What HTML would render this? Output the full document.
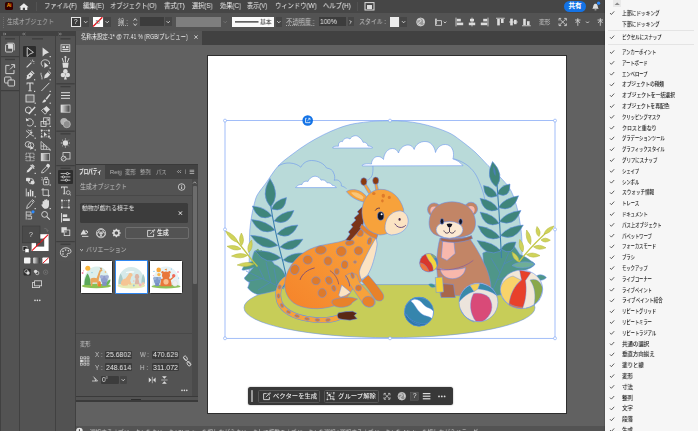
<!DOCTYPE html>
<html lang="ja"><head><meta charset="utf-8"><title>Illustrator</title>
<style>
*{box-sizing:border-box;margin:0;padding:0}
html,body{width:698px;height:431px;overflow:hidden;background:#616161}
body{position:relative;font-family:"Liberation Sans","Noto Sans CJK JP",sans-serif;font-size:6.5px;color:#dcdcdc;line-height:1}
.a{position:absolute}
.t{position:absolute;white-space:nowrap;transform-origin:0 50%;line-height:10px;height:10px;will-change:transform}
svg{position:absolute;left:0;top:0;overflow:visible}
.fld{position:absolute;background:#3e3e3e;border-radius:1px}
</style></head><body>
<div class="a" id="menubar" style="left:0px;top:0px;width:605px;height:13px;background:#464646;"></div>
<div class="a" id="ctrl" style="left:0px;top:13px;width:605px;height:18px;background:#535353;"></div>
<div class="a" id="tabstrip" style="left:0px;top:31px;width:605px;height:13.6px;background:#414141;"></div>
<div class="a" id="tab" style="left:75px;top:31px;width:127px;height:13.6px;background:#565656;"></div>
<div class="a" id="leftbg" style="left:0px;top:31px;width:75.5px;height:400px;background:#414141;"></div>
<div class="a" id="status" style="left:75.5px;top:425.5px;width:530px;height:6px;background:#535353;"></div>
<div class="a" id="artboard" style="left:206.5px;top:55px;width:360px;height:359px;background:#fff;border:1px solid #2e2e2e;"></div>
<svg width="698" height="431" viewBox="0 0 698 431" style="position:absolute;left:0;top:0">
<defs><linearGradient id="gb" x1="0" y1="1" x2="1" y2="0"><stop offset="0" stop-color="#f5832a"/><stop offset="1" stop-color="#f9a63e"/></linearGradient><clipPath id="cb1"><circle cx="478.5" cy="302.3" r="19.4"/></clipPath><clipPath id="cb2"><ellipse cx="521.5" cy="289.3" rx="21.2" ry="19.3"/></clipPath><clipPath id="cb3"><circle cx="428.8" cy="262.8" r="9.2"/></clipPath><clipPath id="cb4"><circle cx="419" cy="311.7" r="14.6"/></clipPath></defs>
<g stroke="#6390f0" stroke-width=".55" stroke-linejoin="round">
<ellipse cx="389.5" cy="307.7" rx="145.5" ry="30" fill="#c7cd58"/>
<path d="M249.0 284.6 C249.0 280.5 249.1 266.6 249.2 260.0 C249.3 253.4 249.3 250.0 249.4 245.0 C249.5 240.0 249.4 235.0 249.8 230.0 C250.2 225.0 250.9 220.0 251.8 215.0 C252.7 210.0 254.2 203.7 255.3 200.0 C256.4 196.3 256.7 195.8 258.5 193.0 C260.3 190.2 262.8 187.4 266.0 183.0 C269.2 178.6 273.6 171.1 277.9 166.3 C282.2 161.6 287.0 158.3 292.0 154.5 C297.0 150.7 302.6 146.7 307.9 143.4 C313.2 140.1 318.6 137.2 323.6 134.7 C328.6 132.2 333.5 130.1 337.9 128.4 C342.3 126.7 346.3 125.5 350.0 124.6 C353.7 123.7 355.8 123.4 360.0 122.8 C364.2 122.2 370.0 121.5 375.0 121.2 C380.0 120.9 385.0 120.7 390.0 120.7 C395.0 120.7 400.0 120.8 405.0 121.3 C410.0 121.8 415.0 122.5 420.0 123.5 C425.0 124.5 430.0 125.9 435.0 127.5 C440.0 129.1 445.8 131.2 450.0 133.3 C454.2 135.4 455.8 136.9 460.0 140.0 C464.2 143.1 470.3 147.8 475.0 152.0 C479.7 156.2 483.4 160.9 488.0 165.5 C492.6 170.1 498.8 175.5 502.6 179.7 C506.4 183.9 508.6 186.2 511.0 190.8 C513.4 195.4 515.4 201.6 517.0 207.5 C518.6 213.4 519.7 219.8 520.5 226.0 C521.3 232.2 521.8 235.2 522.0 245.0 C522.2 254.8 522.0 278.0 522.0 284.6 Z" fill="#b9dad9"/>
<path d="M453.8 158.8 C455.0 159.2 458.5 160.2 461.0 161.5 C463.5 162.8 466.5 164.3 469.0 166.6 C471.5 168.8 473.8 171.3 476.0 175.0 C478.2 178.7 480.5 184.8 482.0 189.0 C483.5 193.2 484.5 198.2 485.0 200.0" fill="none"/>
<path d="M278 166.2 C282 163.5 286 162.8 290 163 C294.5 163.3 298.5 165 300.8 167.2 C303 163 307 160.5 311.5 160.5 C318 160.5 324 163.5 326.5 168 C330 168.5 333 170 333.6 173 C335 175.5 335 178 334.2 180.3 C336 179.6 338.5 180 339.5 181.2 C341 182.5 341.6 184.2 341.3 186 C343.5 186.5 345.5 187.5 346.4 188.7" fill="none"/>
<path d="M372.9 166 C373.1 170 372.9 173 372.1 175.5 C371 178 369.2 179.6 367 180.3" fill="none"/>
<path d="M332.6 148 C333 146.3 335.5 146 338.5 146.2 C338 143 340 141 342.5 141.6 C343.5 138.5 347 137 350 139 C351.5 136 356 134.5 358.8 137 C361 138.5 362.5 140.5 363 142.3 C365.5 141.8 367.5 143.5 368 146 C370.5 146 372.5 146.8 372.5 148 Z" fill="#fff"/>
<path d="M362.3 165 C364 163.8 368 163.5 371.5 164 C371.5 160 374.5 156.5 378 156.5 C380 156.5 382 157.5 383.5 159.5 C384 153 388 148.5 392.5 148.5 C395.5 148.5 397.5 150.5 398.5 153 C400 148 404 145 408 145 C411 145 413 146.8 414.2 149.5 C415.5 144.5 420 141.5 425 141.5 C430.5 141.5 434.5 146 435.5 152.5 C437 147.5 441 144.3 445.5 144.5 C450.5 144.8 453.5 149 453.5 154.5 C453.5 156.5 453.3 158 452.8 159 C457 160 460.5 162.5 463 165.7 L362.3 165.9 Z" fill="#fff"/>
<path d="M295.6 187.6 C297 185.5 299.5 184.3 302 184.5 C302.5 182 305.5 180.5 308 181.5 C309.5 178 313 175.8 316 176.3 C318.5 176.8 320.3 178.3 321 180.2 C323.5 179.3 326 180.5 327 182.8 C329.5 182.5 331.5 183.5 332.3 185.3 C334.5 185.5 336 186.5 336.3 187.6 Z" fill="#fff"/>
<path d="M254.5 251 C258 250 262 252.5 264 256 C268 257.5 272 260 274.5 264.5 C279 266 283.5 270 285.5 276 L286 286 C283 288 281 289 279 289.8 C272 291.8 264 293.8 257.5 294.6 C253 293 249.5 290.5 247.7 287.8 L249.8 282.4 C247 281.5 245 280 244.3 278 L253.4 267.6 C249 269.5 245 270.5 242 270 C243 266 247 262.5 252 261.5 C252 258 253 254 254.5 251 Z" fill="#4f9689"/>
<path d="M255.5 250.5 L258 248.8 L259.4 250.6 L262 250 L261.4 253 L257.5 255.5 Z" fill="#6aa860" stroke="none"/>
<path d="M246 271 L284 289 M258 266 L264 279 M266 262 L271 283 M249 281 L262 278.6 M258 290 L270 282.5 M274 268 L277 285" fill="none" stroke="#4f86c8" stroke-width=".6"/>
<path d="M270.5 204 C273 222 277 240 283 262 L288 284" fill="none" stroke="#3a7fae" stroke-width="1.1"/>
<path d="M270.7 207.0 Q280.9 194.8 270.0 178.5 Q259.9 195.3 270.7 207.0 Z" fill="#3f857b" />
<path d="M271.5 209.0 Q285.0 213.6 286.5 197.5 Q274.7 200.1 271.5 209.0 Z" fill="#3f857b" />
<path d="M274.0 221.0 Q287.9 227.1 294.0 210.5 Q280.0 212.1 274.0 221.0 Z" fill="#3f857b" />
<path d="M277.0 234.0 Q290.5 241.2 298.0 225.0 Q283.8 225.5 277.0 234.0 Z" fill="#3f857b" />
<path d="M280.0 247.0 Q293.5 255.0 303.0 239.2 Q288.0 238.9 280.0 247.0 Z" fill="#3f857b" />
<path d="M283.0 260.0 Q295.8 268.4 305.0 253.0 Q290.7 252.2 283.0 260.0 Z" fill="#3f857b" />
<path d="M272.0 216.0 Q266.1 207.1 252.3 206.0 Q258.1 222.8 272.0 216.0 Z" fill="#3f857b" />
<path d="M275.0 230.0 Q267.2 220.8 251.4 219.6 Q260.1 237.0 275.0 230.0 Z" fill="#3f857b" />
<path d="M278.0 245.5 Q268.3 236.2 250.6 235.3 Q262.2 252.8 278.0 245.5 Z" fill="#3f857b" />
<path d="M281.0 258.0 Q271.5 249.9 255.0 251.0 Q266.9 267.0 281.0 258.0 Z" fill="#3f857b" />
<path d="M236 240 C241 246 246 252 251 259 L257.5 266.5" fill="none" stroke="#c3c748" stroke-width="1.3"/>
<path d="M238.0 242.5 Q235.5 234.7 225.5 231.0 Q230.0 240.7 238.0 242.5 Z" fill="#d0d35a" stroke="#b4b840"/>
<path d="M241.6 245.5 Q245.5 240.2 241.4 233.0 Q237.6 240.3 241.6 245.5 Z" fill="#d0d35a" stroke="#b4b840"/>
<path d="M241.0 249.0 Q235.9 243.9 227.0 246.3 Q234.3 251.9 241.0 249.0 Z" fill="#d0d35a" stroke="#b4b840"/>
<path d="M248.6 252.5 Q253.7 248.2 251.6 240.0 Q246.0 246.3 248.6 252.5 Z" fill="#d0d35a" stroke="#b4b840"/>
<path d="M247.5 255.4 Q240.6 251.5 231.5 256.1 Q241.0 259.9 247.5 255.4 Z" fill="#d0d35a" stroke="#b4b840"/>
<path d="M254.0 264.0 Q246.7 260.5 237.2 265.0 Q247.2 268.4 254.0 264.0 Z" fill="#d0d35a" stroke="#b4b840"/>
<path d="M482.8 253 C488 250.5 494 249.5 500 249.3 C504 247 508 244.5 512.2 244 C515 247 517.5 250.5 519.8 254.6 C524 256 528 258.5 531 261 C533 262 534.5 263 535 264.4 C533 267 529 269 524 270.4 L536 290 L492 296 C487 287 483.5 270 482.8 253 Z" fill="#4f9689"/>
<path d="M512 265.5 C518 261.5 528 260.5 535 264 C530 268.5 519 269.5 512 265.5 Z" fill="#6fae96"/>
<path d="M536.4 276 C539.5 274 543.5 274.5 546.4 277.6 C543.5 280.6 539.5 281 536.4 279 Z" fill="#4f9689"/>
<path d="M492 292 L503 266 L509 252 M500 273 L491 258 M504 264 L514 259 M497 280 L508 276" fill="none" stroke="#4f86c8" stroke-width=".6"/>
<path d="M496 170 C498 195 500 225 501.5 258" fill="none" stroke="#3a7fae" stroke-width="1.1"/>
<path d="M496.4 187.0 Q505.2 174.7 492.5 161.5 Q484.3 177.9 496.4 187.0 Z" fill="#3f857b" />
<path d="M495.3 176.0 Q496.6 171.4 493.5 166.0 Q492.5 172.2 495.3 176.0 Z" fill="#4a7fb5" stroke="none"/>
<path d="M497.3 196.0 Q494.7 187.4 483.5 185.5 Q484.0 201.4 497.3 196.0 Z" fill="#3f857b" />
<path d="M498.3 209.5 Q493.4 200.3 480.0 198.3 Q484.2 215.4 498.3 209.5 Z" fill="#3f857b" />
<path d="M499.3 223.5 Q493.9 214.1 480.0 212.0 Q484.9 229.3 499.3 223.5 Z" fill="#3f857b" />
<path d="M500.2 237.5 Q493.2 227.9 477.8 225.8 Q485.1 243.6 500.2 237.5 Z" fill="#3f857b" />
<path d="M501.0 251.0 Q493.1 241.7 477.0 240.4 Q485.9 257.9 501.0 251.0 Z" fill="#3f857b" />
<path d="M497.3 194.0 Q510.3 199.5 510.0 184.0 Q499.4 185.6 497.3 194.0 Z" fill="#3f857b" />
<path d="M498.3 207.5 Q513.0 213.3 518.6 195.8 Q504.2 198.0 498.3 207.5 Z" fill="#3f857b" />
<path d="M499.3 221.5 Q514.1 227.9 521.0 210.4 Q506.0 212.1 499.3 221.5 Z" fill="#3f857b" />
<path d="M500.2 235.5 Q515.0 242.4 523.3 225.0 Q507.7 226.3 500.2 235.5 Z" fill="#3f857b" />
<path d="M501.0 249.0 Q512.5 257.3 516.0 242.0 Q505.1 241.3 501.0 249.0 Z" fill="#3f857b" />
<path d="M519 262 C528 250 540 238 552 227.5" fill="none" stroke="#c3c748" stroke-width="1.3"/>
<path d="M530.5 244.5 Q532.8 237.4 526.6 230.0 Q524.9 239.5 530.5 244.5 Z" fill="#d0d35a" stroke="#b4b840"/>
<path d="M539.0 236.5 Q541.9 231.6 537.0 226.5 Q534.4 233.0 539.0 236.5 Z" fill="#d0d35a" stroke="#b4b840"/>
<path d="M544.0 234.0 Q550.6 233.6 554.0 226.0 Q545.8 227.7 544.0 234.0 Z" fill="#d0d35a" stroke="#b4b840"/>
<path d="M541.0 240.0 Q544.8 243.9 550.3 240.2 Q545.0 236.3 541.0 240.0 Z" fill="#d0d35a" stroke="#b4b840"/>
<path d="M533.5 246.8 Q538.4 251.2 546.0 247.8 Q539.1 243.3 533.5 246.8 Z" fill="#d0d35a" stroke="#b4b840"/>
<path d="M522.8 252.0 Q525.4 245.8 519.8 239.5 Q517.7 247.7 522.8 252.0 Z" fill="#d0d35a" stroke="#b4b840"/>
<path d="M526.5 254.6 Q531.9 259.1 540.0 255.6 Q532.5 251.0 526.5 254.6 Z" fill="#d0d35a" stroke="#b4b840"/>
<path d="M519.0 262.0 Q519.2 255.6 512.0 252.0 Q512.9 260.0 519.0 262.0 Z" fill="#d0d35a" stroke="#b4b840"/>
<path d="M286 279 C279 284 276.5 293 279.5 302 C283 311 294 316.5 308 319 C320 321 332 320.5 341 316.5" fill="none" stroke="#6390f0" stroke-width="5.8" stroke-linecap="round"/>
<path d="M286 279 C279 284 276.5 293 279.5 302 C283 311 294 316.5 308 319 C320 321 332 320.5 341 316.5" fill="none" stroke="#f7a23b" stroke-width="4.8" stroke-linecap="round"/>
<ellipse cx="279.5" cy="287" rx="1.6" ry="2.2" transform="rotate(15.8 279.5 287)" fill="#de7a2a"/>
<ellipse cx="278.5" cy="296" rx="1.5" ry="2.3" transform="rotate(-5.8 278.5 296)" fill="#de7a2a"/>
<ellipse cx="282" cy="305.5" rx="1.5" ry="2.2" transform="rotate(-35.8 282 305.5)" fill="#de7a2a"/>
<ellipse cx="288.5" cy="312" rx="2.2" ry="1.4" transform="rotate(25.8 288.5 312)" fill="#de7a2a"/>
<ellipse cx="297" cy="316" rx="2.4" ry="1.4" transform="rotate(15.8 297 316)" fill="#de7a2a"/>
<ellipse cx="307" cy="318.8" rx="2.4" ry="1.4" transform="rotate(8 307 318.8)" fill="#de7a2a"/>
<ellipse cx="317.5" cy="320" rx="2.4" ry="1.4" transform="rotate(2 317.5 320)" fill="#de7a2a"/>
<ellipse cx="328" cy="320" rx="2.4" ry="1.4" transform="rotate(-5.8 328 320)" fill="#de7a2a"/>
<path d="M338.5 312.8 L346 311.6 L352.5 311.3 L356.8 313.2 L354.2 315.6 L357.2 318.8 L350 320.2 L343 319.6 L338.5 318.5 C337 316.5 337 314.5 338.5 312.8 Z" fill="#5a2815"/>
<path d="M361.5 281 L368.3 275 C373 280.5 378.5 287 382.5 293 C385 297 383.5 300.5 380 301 C377 301.3 375 299.5 373.5 297 C370 291.5 366 286 361.5 281 Z" fill="#e8822a"/>
<path d="M361.5 224 C357 230 351.5 236 346.5 239.5 C338 243.5 322 243.5 310 249 C297 255 287.5 267 285 280 C283.3 291 288 300.5 297 305 C309 310.5 326 309.5 338 304.5 C344 301.5 349 296 352 290 L361.5 281 L368.5 260 L377.5 235 Z" fill="url(#gb)"/>
<path d="M376.2 238 C375 240 374 241 373.3 242.5 C370 248 367 254 364.4 259.7 C362 264 360 268 359.4 271.6 C359.4 274.5 360.2 277.5 361.6 279.6 L367.5 275.3 C370 271 372 266.5 373.3 261.7 C375 256 376.5 250 377.2 244 Z" fill="#fbe3c3"/>
<path d="M341.7 285 L350.6 292.3 L346 295.5 L340.7 297.2 L338.7 295.2 Z" fill="#fbe3c3"/>
<path d="M332 300.5 C336 297.8 345 297 352 297.4 L357.6 299 L352.8 302.2 C351 305.5 346 307.5 340 307.3 C335 307 331 304.5 332 300.5 Z" fill="#e8822a"/>
<path d="M345.6 276 C348 273 353 272.5 357 275 L359.6 282.4 C365 288 370.5 294 374.4 299 C376.5 303 374.5 306.5 370.5 307 C366.5 307.3 363.5 305 361.5 301.5 C356.5 294 350.5 285.5 345.6 277.5 Z" fill="#f7a23b"/>
<path d="M362.2 301.8 C362.5 298 366 295.8 369.5 296.4 C372.5 297 374.8 299.5 374.6 302.8 C374 306 371.5 307.2 368.5 307 C365.2 306.6 363 304.6 362.2 301.8 Z" fill="#e8822a"/>
<ellipse cx="307.7" cy="259.8" rx="4.6" ry="4.4" transform="rotate(0 307.7 259.8)" fill="#de7a2a"/>
<ellipse cx="328" cy="261" rx="4" ry="4.3" transform="rotate(0 328 261)" fill="#de7a2a"/>
<ellipse cx="294.8" cy="269.6" rx="4.4" ry="5" transform="rotate(20 294.8 269.6)" fill="#de7a2a"/>
<ellipse cx="316" cy="280.8" rx="4.3" ry="4" transform="rotate(0 316 280.8)" fill="#de7a2a"/>
<ellipse cx="328.9" cy="280.4" rx="3.3" ry="4" transform="rotate(-20 328.9 280.4)" fill="#de7a2a"/>
<ellipse cx="322.2" cy="293" rx="4.2" ry="4.4" transform="rotate(0 322.2 293)" fill="#de7a2a"/>
<ellipse cx="333.8" cy="288.3" rx="2" ry="3" transform="rotate(-15.8 333.8 288.3)" fill="#de7a2a"/>
<ellipse cx="341.3" cy="251.4" rx="5" ry="4.9" transform="rotate(0 341.3 251.4)" fill="#de7a2a"/>
<ellipse cx="358.5" cy="250.8" rx="4.3" ry="4.2" transform="rotate(0 358.5 250.8)" fill="#de7a2a"/>
<ellipse cx="349.8" cy="242.8" rx="4.5" ry="2.6" transform="rotate(-10 349.8 242.8)" fill="#de7a2a"/>
<ellipse cx="360" cy="233" rx="3.4" ry="3.6" transform="rotate(0 360 233)" fill="#de7a2a"/>
<ellipse cx="369.5" cy="241" rx="2" ry="3.6" transform="rotate(15.8 369.5 241)" fill="#de7a2a"/>
<ellipse cx="344.7" cy="264.7" rx="3.3" ry="4" transform="rotate(10 344.7 264.7)" fill="#de7a2a"/>
<ellipse cx="352.5" cy="275.5" rx="1.6" ry="3" transform="rotate(-15.8 352.5 275.5)" fill="#de7a2a"/>
<ellipse cx="358.5" cy="288" rx="3" ry="3" transform="rotate(0 358.5 288)" fill="#de7a2a"/>
<ellipse cx="336.8" cy="271.6" rx="2.4" ry="3" transform="rotate(0 336.8 271.6)" fill="#de7a2a"/>
<ellipse cx="355" cy="262" rx="1.4" ry="1.2" transform="rotate(0 355 262)" fill="#de7a2a"/>
<ellipse cx="320.8" cy="250" rx="5.6" ry="4.2" transform="rotate(-8 320.8 250)" fill="#de7a2a"/>
<path d="M300 280 C302 274 307.5 269.5 314.6 267.9" fill="none" stroke="#5a3a8a" stroke-width=".7"/>
<path d="M329.9 270.6 C334.5 273.5 338 279 338.7 284.4 M345.6 275.5 C348 278.5 349.6 282.5 349.6 286.4" fill="none" stroke="#5a3a8a" stroke-width=".6"/>
<path d="M362.5 206.5 L357.2 211.8 L359 213.6 L354 218 L355.8 220 L351 224.8 L352.8 226.8 L348.3 232 L350 234 L345.6 240 L350 240.8 C355 236 359.5 230.5 363 225.5 L364.5 214 Z" fill="#7a3418"/>
<path d="M363 184 L365.5 183.3 L371.5 192.5 L368.5 193.5 Z M374.6 183 L377 183 L378.6 190.5 L375.8 191 Z" fill="#f7a23b"/>
<ellipse cx="363.8" cy="181.6" rx="3.1" ry="3.8" fill="#8b3a0e"/><ellipse cx="375.7" cy="180.7" rx="3" ry="3.6" fill="#8b3a0e"/>
<path d="M365.8 202.5 C359 201.5 350.5 197.5 346.4 191.6 C351.5 187.8 361 189.3 366.5 196.5 Z" fill="#f7a23b"/>
<path d="M362.5 199.5 C358 198.5 353.5 196 351 192.8 C354.5 191.5 360 193 363.5 197 Z" fill="#f9c67a" stroke="none"/>
<path d="M362 213 C361.5 200 369 190 380 189.3 C391 188.8 400 197 403.5 209 L404 216 C399 228 390 234.5 380 235 C369 234 362.5 225 362 213 Z" fill="#f7a23b"/>
<path d="M361.8 224 C366 229 371.5 233 377.8 234.6 L376.6 238.8 C370 237 364 232.5 360 227.5 Z" fill="#e8822a"/>
<path d="M385 229 C384.5 219 391 211 400 210.8 C405.5 211.5 408.5 216.5 408.2 222 C407.5 229.5 400.5 234.5 391.5 235 C388 234.8 385.5 232.5 385 229 Z" fill="#fbe3c3"/>
<ellipse cx="373.8" cy="193.6" rx="1.7" ry="1.5" fill="#de7a2a" stroke="none"/>
<ellipse cx="383.3" cy="195.7" rx="1.7" ry="2" fill="#de7a2a" stroke="none"/>
<ellipse cx="389.3" cy="197.4" rx="1.5" ry="1.6" fill="#de7a2a" stroke="none"/>
<ellipse cx="382.4" cy="200.8" rx="1.3" ry="1.6" fill="#de7a2a" stroke="none"/>
<ellipse cx="380.7" cy="216" rx="3.2" ry="4.2" fill="#141420"/><circle cx="381.6" cy="214.2" r="1" fill="#fff" stroke="none"/>
<path d="M375.2 210.6 C376 208.8 378 207.8 380 208.2" fill="none" stroke="#3a2050" stroke-width=".8"/>
<ellipse cx="399.6" cy="219.4" rx="1.1" ry="1.3" fill="#4a2a4a" stroke="none"/>
<path d="M394.8 223.6 C397 228 402.5 228.8 405.8 225.2" fill="none" stroke="#4a2a6a" stroke-width=".8"/>
<path d="M440 238 C437.8 246 436.6 256 436.7 264 C436.8 274 438 285 440.5 295.6 L490 295.6 C491 291 491.2 287 490.6 283 C489.5 276 487 268.5 483.5 262 C479.5 253.5 474.5 245 469 237.5 Z" fill="#c28566"/>
<path d="M440.5 283.5 L453.5 284.5 L455.3 297.5 L441 297.5 Z" fill="#a8664a"/>
<path d="M435.3 277.5 L442.5 277 L443.6 292 L436.2 292.5 Z" fill="#f2d43a"/>
<path d="M428.5 284.5 C431 283 434 284 435.5 286.5 C433.5 288 430.5 287.5 428.5 284.5 Z" fill="#3f9688"/>
<path d="M440 268.5 C447 270.5 458 270 465.5 267.5 C465.5 273.5 460 278.5 452.5 278.8 C446 278.8 441 275 440 268.5 Z" fill="#f8b8ac"/>
<path d="M435.7 268.8 C444 271.5 462 269.5 473.3 260.4" fill="none" stroke="#8a5a9a" stroke-width=".7"/>
<path d="M442.7 240.9 L453.8 240.9 L455.2 253.4 L447 260.4 L441.3 257.6 Z" fill="#f8b8ac"/>
<path d="M441 237.8 C451 240.5 462 239.5 471.5 235.6 L472.5 238.6 C463 242.8 451 243.5 440.8 240.8 Z" fill="#a8664a"/>
<circle cx="434.2" cy="209.6" r="6.7" fill="#c28566"/><circle cx="434.2" cy="210.4" r="3.9" fill="#f8b8ac" stroke="none"/>
<circle cx="471" cy="208.8" r="6.6" fill="#c28566"/><circle cx="470.8" cy="209.8" r="3.9" fill="#f8b8ac" stroke="none"/>
<path d="M452 201.8 C462 201.8 470 206 473.6 214 C476.6 221 476.2 229 471.4 233.4 C466 237 458 237.6 452 237.6 C446 237.6 438 237 433.2 233.4 C428.2 229 428.2 221 430.8 214 C434.4 206 442 201.8 452 201.8 Z" fill="#c28566"/>
<ellipse cx="449.5" cy="229.8" rx="13.4" ry="8.4" fill="#fbe9d2"/>
<ellipse cx="442" cy="221.4" rx="1.8" ry="2.8" fill="#141420"/><ellipse cx="460.6" cy="221.6" rx="1.8" ry="2.8" fill="#141420"/>
<path d="M446.7 224 C448.5 223.2 450.5 223.2 452.3 224 C452 226 450.8 227.3 449.5 227.6 C448.2 227.3 447 226 446.7 224 Z" fill="#141420" stroke="none"/>
<path d="M449.5 227.5 L449.5 231.5 M443.8 230.5 C445 233.6 448 234 449.5 231.5 C451 234 454 233.6 455.2 230.5" fill="none" stroke="#2a1a3a" stroke-width=".8"/>
<g clip-path="url(#cb3)" stroke-width=".4">
<rect x="418" y="252" width="22" height="22" fill="#d8382c"/>
<path d="M418 263 C422 262 426 265 428 269 C429 271 429.5 272.5 430 274 L418 274 Z" fill="#f0743c"/>
<path d="M425 253 C427 257 428 260 431 263 C433 266 433.5 269 433 272.5 L437 268 C437.5 264 436 261 434 258.5 C432 256 431 254.5 430.5 252.5 Z" fill="#f4d63c"/>
<path d="M430.5 252.5 C431 254.5 432 256 434 258.5 L437.5 257 L434 252 Z" fill="#8ab85a"/>
<path d="M434 258.5 C436 261 437.5 264 437 268 L440 268 L440 256 L437.5 257 Z" fill="#3f8ab8"/>
</g><circle cx="428.8" cy="262.8" r="9.2" fill="none"/>
<g clip-path="url(#cb4)" stroke-width=".4">
<rect x="404" y="296" width="30" height="32" fill="#3585ad"/>
<path d="M404 312 C410 322 424 328 434 320 L434 330 L404 330 Z" fill="#2c78a6"/>
<path d="M405 308 C407 301 414 297 421 297.5 L434 302 L434 296 L404 296 Z" fill="#3f95a8"/>
<path d="M410.8 301 C415.5 297.2 420.5 300.5 423.5 304.5 C427 308.5 431 307.5 433.6 311.5 L433.4 320 C430 315.5 425 317 420.5 313 C416.5 309.5 415 304.5 410.8 301 Z" fill="#fff"/>
</g><circle cx="419" cy="311.7" r="14.6" fill="none"/>
<path d="M406.5 314 C409 320 414 324 420 324.5" fill="none" stroke-width=".4"/>
<g clip-path="url(#cb1)" stroke-width=".4">
<rect x="458" y="282" width="42" height="42" fill="#ece4dc"/>
<path d="M459 302 C459.5 294 464 288 470 285.5 L474 291.5 C468 293 463 297 459 302 Z" fill="#3a8aa8"/>
<path d="M470 285.5 C473 284 477 283.3 480 283.6 L478 289 L474 291.5 Z" fill="#f4cf5a"/>
<path d="M480 283.6 C488 284.5 494.5 289.5 497.2 296 C492 291.5 485 289.5 478 289 Z" fill="#3a8aa8"/>
<path d="M473.5 293.7 C469 302 469.5 313 476 321.5 L482 321.8 C492 316 494.5 306 489 297.5 C484.5 293.5 478.5 292.5 473.5 293.7 Z" fill="#d94a78"/>
</g><circle cx="478.5" cy="302.3" r="19.4" fill="none"/>
<path d="M460.5 309 C463 315.5 468 320 474 321.5 M461.5 311.5 C464.5 317 469 320.5 474.5 322.3" fill="none" stroke-width=".4"/>
<g clip-path="url(#cb2)" stroke-width=".4">
<rect x="499" y="269" width="46" height="42" fill="#f2e8d8"/>
<path d="M500 290 C501 283 506 277.5 513 276 L521 280 C514 286 510 296 509.5 305 C504.5 301.5 501 296 500 290 Z" fill="#f9d36a"/>
<path d="M519.5 270 L531 272.5 L525.5 280.5 C527 290 526 300 522.5 308.5 L509 305 C510 295 514 286 521.5 280 Z" fill="#e8412a"/>
<path d="M530 280 C536 278 540.5 281 542.7 288 C542 295 539 301 534 305 C536 296 535 287 530 280 Z" fill="#8aa84a"/>
<path d="M509.3 303.5 C513 306 518 307.3 522.8 307 L521.5 311 L508 308 Z" fill="#f07a2c"/>
</g><ellipse cx="521.5" cy="289.3" rx="21.2" ry="19.3" fill="none"/>
<path d="M503 298.5 C507 304.5 514 308 521 308.5 M526 308 C532 307 537 303.5 540 299" fill="none" stroke-width=".4"/>
</g>
<rect x="225" y="120.6" width="330" height="217.7" fill="none" stroke="#7aa2f5" stroke-width=".7"/>
<circle cx="225" cy="120.6" r="1.5" fill="#fff" stroke="#7aa2f5" stroke-width=".6"/>
<circle cx="390" cy="120.6" r="1.5" fill="#fff" stroke="#7aa2f5" stroke-width=".6"/>
<circle cx="555" cy="120.6" r="1.5" fill="#fff" stroke="#7aa2f5" stroke-width=".6"/>
<circle cx="225" cy="229.4" r="1.5" fill="#fff" stroke="#7aa2f5" stroke-width=".6"/>
<circle cx="555" cy="229.4" r="1.5" fill="#fff" stroke="#7aa2f5" stroke-width=".6"/>
<circle cx="225" cy="338.3" r="1.5" fill="#fff" stroke="#7aa2f5" stroke-width=".6"/>
<circle cx="390" cy="338.3" r="1.5" fill="#fff" stroke="#7aa2f5" stroke-width=".6"/>
<circle cx="555" cy="338.3" r="1.5" fill="#fff" stroke="#7aa2f5" stroke-width=".6"/>
<circle cx="307.7" cy="120.5" r="5.3" fill="#1473e6"/>
<path d="M306.6 118.3 H305.6 V122.7 H309.9 V121.6" fill="none" stroke="#fff" stroke-width=".8"/><path d="M307.4 120.9 L309.8 118.5 M308.2 118.3 H310 V120.1" fill="none" stroke="#fff" stroke-width=".7"/>
</svg>
<div class="a" style="left:4.6px;top:2.3px;width:8.8px;height:7.4px;background:#330000;border-radius:1.6px;color:#ff9a00;font-size:5px;font-weight:bold;line-height:7.4px;text-align:center;letter-spacing:-.2px">Ai</div>
<svg width="698" height="431" viewBox="0 0 698 431"><path d="M23.9 3.2 L28.6 7.2 H27.3 V10 H25 V7.8 H22.8 V10 H20.5 V7.2 H19.2 Z" fill="#ececec"/><rect x="36" y="2" width="0.6" height="9" fill="#5c5c5c"/><rect x="357.3" y="2" width="0.6" height="9" fill="#5c5c5c"/><rect x="365" y="2.6" width="9" height="7.4" fill="none" stroke="#ddd" stroke-width="1"/><rect x="367" y="5" width="5" height="4" fill="#ddd"/></svg>
<div class="t" style="left:43.6px;top:1.3px;font-size:7px;color:#ececec;transform:scaleX(0.896)">ファイル(F)</div>
<div class="t" style="left:83px;top:1.3px;font-size:7px;color:#ececec;transform:scaleX(0.9)">編集(E)</div>
<div class="t" style="left:110px;top:1.3px;font-size:7px;color:#ececec;transform:scaleX(0.892)">オブジェクト(O)</div>
<div class="t" style="left:164px;top:1.3px;font-size:7px;color:#ececec;transform:scaleX(0.906)">書式(T)</div>
<div class="t" style="left:192px;top:1.3px;font-size:7px;color:#ececec;transform:scaleX(0.882)">選択(S)</div>
<div class="t" style="left:219.6px;top:1.3px;font-size:7px;color:#ececec;transform:scaleX(0.89)">効果(C)</div>
<div class="t" style="left:247.4px;top:1.3px;font-size:7px;color:#ececec;transform:scaleX(0.874)">表示(V)</div>
<div class="t" style="left:275px;top:1.3px;font-size:7px;color:#ececec;transform:scaleX(0.899)">ウィンドウ(W)</div>
<div class="t" style="left:323.3px;top:1.3px;font-size:7px;color:#ececec;transform:scaleX(0.902)">ヘルプ(H)</div>
<div class="a" style="left:564.2px;top:0.9px;width:21.6px;height:11px;background:#1473e6;border-radius:5.5px;color:#fff;font-size:6.6px;font-weight:bold;line-height:10.6px;text-align:center">共有</div>
<svg width="698" height="431" viewBox="0 0 698 431"><path d="M592.3 8.8 C593.2 8 593 5.2 594.2 4.2 C595 3.6 596 3.6 596.8 4.2 C598 5.2 597.8 8 598.7 8.8 Z M594.6 9.4 h1.8 v0.8 h-1.8z" fill="#ddd"/><circle cx="598.6" cy="3.2" r="1.6" fill="#2d8cff"/></svg>
<svg width="698" height="431" viewBox="0 0 698 431"><g fill="#8a8a8a"><rect x="3" y="17" width="0.7" height="0.7"/><rect x="3" y="19" width="0.7" height="0.7"/><rect x="3" y="21" width="0.7" height="0.7"/><rect x="3" y="23" width="0.7" height="0.7"/><rect x="3" y="25" width="0.7" height="0.7"/><rect x="3" y="27" width="0.7" height="0.7"/></g></svg>
<div class="t" style="left:7.3px;top:17px;font-size:6.6px;color:#b4b4b4;transform:scaleX(0.891)">生成オブジェクト</div>
<div class="a" style="left:71.4px;top:17px;width:9.4px;height:9.6px;background:#3a3a3a;border:1px solid #e6e6e6;"></div>
<div class="t" style="left:74.2px;top:16.9px;font-size:6.5px;color:#f0f0f0;">?</div>
<div class="a" style="left:82.3px;top:17px;width:7px;height:9.6px;background:#464646;"></div>
<div class="a" style="left:92.8px;top:17px;width:9.8px;height:9.6px;background:#fff;"></div>
<svg width="698" height="431" viewBox="0 0 698 431"><line x1="93" y1="26.4" x2="102.4" y2="17.2" stroke="#e8141c" stroke-width="1.4"/><rect x="96.2" y="20.3" width="3" height="3" fill="none" stroke="#888" stroke-width=".6"/><path d="M84.10000000000001 21.2 L85.7 22.8 L87.3 21.2" fill="none" stroke="#ddd" stroke-width=".9"/><path d="M105.4 21.2 L107 22.8 L108.6 21.2" fill="none" stroke="#ddd" stroke-width=".9"/></svg>
<div class="a" style="left:104px;top:17px;width:6.5px;height:9.6px;background:#464646;"></div>
<svg width="698" height="431" viewBox="0 0 698 431"><path d="M105.60000000000001 21.2 L107.2 22.8 L108.8 21.2" fill="none" stroke="#ddd" stroke-width=".9"/></svg>
<div class="t" style="left:117.7px;top:17px;font-size:6.4px;color:#c8c8c8;border-bottom:0.5px dotted #aaa;height:9px;transform:scaleX(0.985)">線 :</div>
<svg width="698" height="431" viewBox="0 0 698 431"><path d="M133.6 20.6 L135.2 18.6 L136.8 20.6 M133.6 23.6 L135.2 25.6 L136.8 23.6" fill="none" stroke="#ddd" stroke-width=".9"/><path d="M166.4 21.2 L168 22.8 L169.6 21.2" fill="none" stroke="#ddd" stroke-width=".9"/></svg>
<div class="a" style="left:140.4px;top:17.4px;width:23.6px;height:9px;background:#3c3c3c;"></div>
<div class="a" style="left:165px;top:17.4px;width:6.5px;height:9px;background:#464646;"></div>
<svg width="698" height="431" viewBox="0 0 698 431"><path d="M166.6 21.2 L168.2 22.8 L169.79999999999998 21.2" fill="none" stroke="#ddd" stroke-width=".9"/></svg>
<div class="a" style="left:175.8px;top:17.2px;width:45.2px;height:9.4px;background:#7e7e7e;"></div>
<svg width="698" height="431" viewBox="0 0 698 431"><path d="M223.6 21.2 L225.2 22.8 L226.79999999999998 21.2" fill="none" stroke="#777" stroke-width=".9"/></svg>
<div class="a" style="left:231.7px;top:17.2px;width:42px;height:9.4px;background:#fbfbfb;"></div>
<svg width="698" height="431" viewBox="0 0 698 431"><line x1="235" y1="21.9" x2="258.5" y2="21.9" stroke="#111" stroke-width="1.1"/></svg>
<div class="t" style="left:260px;top:17px;font-size:6px;color:#222;transform:scaleX(0.957)">基本</div>
<div class="a" style="left:275.5px;top:17.2px;width:6.5px;height:9.4px;background:#464646;"></div>
<svg width="698" height="431" viewBox="0 0 698 431"><path d="M277.2 21.2 L278.8 22.8 L280.40000000000003 21.2" fill="none" stroke="#ddd" stroke-width=".9"/></svg>
<div class="t" style="left:286.4px;top:17px;font-size:6.4px;color:#c8c8c8;border-bottom:0.5px dotted #aaa;height:9px;transform:scaleX(0.975)">不透明度 :</div>
<div class="a" style="left:318.7px;top:17.4px;width:27.8px;height:9px;background:#3c3c3c;"></div>
<div class="t" style="left:319.8px;top:17.2px;font-size:7px;color:#e8e8e8;transform:scaleX(0.927)">100%</div>
<div class="a" style="left:347.5px;top:17.4px;width:6px;height:9px;background:#464646;"></div>
<svg width="698" height="431" viewBox="0 0 698 431"><path d="M349.7 20.3 L351.4 22 L349.7 23.7" fill="none" stroke="#ddd" stroke-width=".9"/></svg>
<div class="t" style="left:358.6px;top:17px;font-size:6.4px;color:#c8c8c8;transform:scaleX(0.927)">スタイル :</div>
<div class="a" style="left:389.6px;top:17.2px;width:9.6px;height:9.6px;background:#ececec;"></div>
<div class="a" style="left:400.2px;top:17.2px;width:6.5px;height:9.6px;background:#464646;"></div>
<svg width="698" height="431" viewBox="0 0 698 431"><path d="M402.0 21.2 L403.6 22.8 L405.20000000000005 21.2" fill="none" stroke="#ddd" stroke-width=".9"/></svg>
<svg width="698" height="431" viewBox="0 0 698 431"><circle cx="420.6" cy="22" r="4" fill="#9a9a9a" stroke="#e0e0e0" stroke-width=".7"/><path d="M418 20 C419.5 18.8 421.5 19.4 421 21 C420.5 22.4 418.6 22 418.4 23.4 C418.6 24.6 420.4 24.8 421.4 25.4 M422.6 19 C423.6 20 424 21.5 423.6 23" fill="none" stroke="#e8e8e8" stroke-width=".8"/><path d="M435.5 18.6 V25.4 H441.5 V20.6 H437 M436.4 18.6 V24.4" fill="none" stroke="#ddd" stroke-width=".8"/><path d="M443.7 21.650000000000002 L445 22.95 L446.3 21.650000000000002" fill="none" stroke="#ddd" stroke-width=".9"/><g fill="#dcdcdc"><rect x="455.6" y="17.6" width=".8" height="8.8"/><rect x="456.8" y="18.8" width="4" height="2.6"/><rect x="456.8" y="22.6" width="6.4" height="2.6"/><rect x="471.6" y="17.6" width=".8" height="8.8"/><rect x="470" y="18.8" width="4" height="2.6"/><rect x="468.8" y="22.6" width="6.4" height="2.6"/><rect x="487.6" y="17.6" width=".8" height="8.8"/><rect x="483.2" y="18.8" width="4" height="2.6"/><rect x="480.8" y="22.6" width="6.4" height="2.6"/><rect x="496" y="17.8" width="8.8" height=".8"/><rect x="497.2" y="19" width="2.6" height="6.4"/><rect x="501" y="19" width="2.6" height="4"/><rect x="509" y="21.6" width="8.8" height=".8"/><rect x="510.2" y="18.6" width="2.6" height="6.8"/><rect x="514" y="19.8" width="2.6" height="4.4"/><rect x="522" y="25.4" width="8.8" height=".8"/><rect x="523.2" y="18.8" width="2.6" height="6.4"/><rect x="527" y="21.2" width="2.6" height="4"/></g><path d="M559.6 19 L565.8 25 M565.8 19 L559.6 25 M559 20.6 V18.4 H561.2 M564.2 18.4 H566.4 V20.6 M559 23.4 V25.6 H561.2 M564.2 25.6 H566.4 V23.4" fill="none" stroke="#ddd" stroke-width=".8"/><path d="M575 20 H580.5 M577.8 18.2 V25.8 M575.6 23 L577.8 20.4 L580 23" fill="none" stroke="#ddd" stroke-width=".8"/><path d="M586.1 21.6 L587.5 23.0 L588.9 21.6" fill="none" stroke="#ddd" stroke-width=".9"/><path d="M597.5 20 H603 M600.3 18.2 V25.8 M598 23 L600.3 20.4 L602.6 23" fill="none" stroke="#ddd" stroke-width=".8"/></svg>
<div class="t" style="left:539px;top:17px;font-size:6.2px;color:#c8c8c8;transform:scaleX(0.905)">変形</div>
<div class="t" style="left:80.7px;top:32.2px;font-size:7px;color:#ececec;transform:scaleX(0.766)">名称未設定-1* @ 77.41 % (RGB/プレビュー)</div>
<svg width="698" height="431" viewBox="0 0 698 431"><path d="M194.4 35.4 L197.6 38.8 M197.6 35.4 L194.4 38.8" stroke="#e0e0e0" stroke-width=".8"/></svg>
<div class="a" style="left:1px;top:36.4px;width:18px;height:395px;background:#535353;"></div>
<div class="a" style="left:20.3px;top:36.4px;width:34.7px;height:395px;background:#535353;"></div>
<div class="a" style="left:56.3px;top:36.4px;width:18.4px;height:225px;background:#535353;"></div>
<div class="a" style="left:56.3px;top:261.4px;width:18.4px;height:170px;background:#525252;"></div>
<svg width="698" height="431" viewBox="0 0 698 431"><g fill="none" stroke="#b0b0b0" stroke-width=".6"><path d="M3.2 33 L4.4 34 L3.2 35 M4.8 33 L6 34 L4.8 35"/><path d="M23.8 33 L22.6 34 L23.8 35 M25.4 33 L24.2 34 L25.4 35"/><path d="M58.6 33 L59.8 34 L58.6 35 M60.2 33 L61.4 34 L60.2 35"/></g></svg>
<svg width="698" height="431" viewBox="0 0 698 431"><g fill="#3e3e3e"><rect x="5" y="38.2" width="10" height="1.3"/><rect x="32" y="38.2" width="11" height="1.3"/><rect x="60.5" y="38.2" width="10" height="1.3"/><rect x="1" y="56" width="18" height="1.2"/><rect x="5" y="58.8" width="10" height="1.3"/><rect x="1" y="90" width="18" height="1.2"/><rect x="56.3" y="83.2" width="18.4" height="1.2"/><rect x="60.5" y="86" width="10" height="1.3"/><rect x="56.3" y="130.6" width="18.4" height="1.2"/><rect x="60.5" y="133.2" width="10" height="1.3"/><rect x="56.3" y="165" width="18.4" height="1.2"/><rect x="60.5" y="167.6" width="10" height="1.3"/><rect x="56.3" y="241" width="18.4" height="1.2"/><rect x="60.5" y="243.6" width="10" height="1.3"/></g></svg>
<svg width="698" height="431" viewBox="0 0 698 431"><g fill="none" stroke="#dcdcdc" stroke-width=".9"><rect x="5.6" y="44.4" width="7" height="7.6" rx="1"/><path d="M7.4 43.2 H13.2 Q14.2 43.2 14.2 44.2 V50.4"/><rect x="8.6" y="44.6" width="3.8" height="3.6" fill="#dcdcdc"/><path d="M9.5 65.4 H5.8 V73.6 H14 V70 M10 69.4 L14.4 65 M11.2 64.6 H14.6 V68"/><rect x="4.6" y="77" width="6.4" height="6" rx="1"/><rect x="8" y="80" width="6.6" height="6" rx="1" fill="#535353"/></g></svg>
<div class="a" style="left:23.3px;top:46.3px;width:13.2px;height:10.4px;background:#2c2c2c;border-radius:1px;"></div>
<svg width="698" height="431" viewBox="0 0 698 431"><path d="M27.2 47.6 L27.2 56.4 L29.6 54.2 L33.4 52.4 Z" fill="none" stroke="#dcdcdc" stroke-width=".9" stroke-linejoin="round"/><path d="M42.6 47.4 L42.6 56.6 L45 54.2 L49 52.6 Z" fill="#dcdcdc"/><rect x="49.6" y="56" width="1.2" height="1.2" fill="#dcdcdc"/><path d="M26.6 67.4 L31.4 62.6" stroke="#dcdcdc" stroke-width="1.2"/><path d="M32.6 59.6 V61.4 M34.4 61.6 H32.9 M30.6 60.6 L31.4 61.4 M33.6 63.2 L34.2 63.8" stroke="#dcdcdc" stroke-width=".7"/><path d="M41.4 64.4 C40.6 61.4 43 59.6 45.6 59.8 C48.4 60 50 62 49.4 64 M43 66.4 C42 65.8 41.6 65.2 41.4 64.4" fill="none" stroke="#dcdcdc" stroke-width=".9"/><path d="M44.4 62.2 L44.4 68.2 L46 66.8 L48.6 66 Z" fill="#dcdcdc"/><rect x="49.6" y="67.6" width="1.2" height="1.2" fill="#dcdcdc"/><path d="M26.4 79.4 L27.2 75.2 L30.6 72 L33.2 74.6 L30.2 78.2 Z" fill="#dcdcdc"/><path d="M31.4 71 L34.2 73.8" stroke="#dcdcdc" stroke-width="1.1"/><circle cx="29.6" cy="75.8" r=".8" fill="#535353"/><rect x="34" y="79.2" width="1.2" height="1.2" fill="#dcdcdc"/><path d="M44 78.6 L44.8 75 L47.8 72 L50.2 74.4 L47.4 77.6 Z" fill="#dcdcdc"/><path d="M48.4 71 L51 73.6" stroke="#dcdcdc" stroke-width="1"/><path d="M41 72.8 C40.6 75.6 42.4 76.2 42 79.4" fill="none" stroke="#dcdcdc" stroke-width=".8"/><rect x="49.6" y="79.2" width="1.2" height="1.2" fill="#dcdcdc"/><path d="M26.6 82.6 H33.4 V84.6 H32.6 V83.6 H30.6 V90.4 H31.8 V91.2 H28.2 V90.4 H29.4 V83.6 H27.4 V84.6 H26.6 Z" fill="#dcdcdc"/><rect x="34" y="90.8" width="1.2" height="1.2" fill="#dcdcdc"/><path d="M41.4 91 L49.4 82.8" stroke="#dcdcdc" stroke-width=".9"/><rect x="49.6" y="90.8" width="1.2" height="1.2" fill="#dcdcdc"/><rect x="26" y="95" width="8" height="7" fill="#6a6a6a" stroke="#dcdcdc" stroke-width=".9"/><rect x="34.6" y="102.6" width="1.2" height="1.2" fill="#dcdcdc"/><path d="M49.8 93.8 L45.6 98.6 L46.8 99.8 L50.6 94.6 Z" fill="#dcdcdc"/><path d="M45 99.2 C43.6 99.4 43.2 101 42 102.4 C43.8 102.8 45.8 102 46.2 100.4 Z" fill="#dcdcdc"/><rect x="49.6" y="102.6" width="1.2" height="1.2" fill="#dcdcdc"/><circle cx="28.4" cy="110" r="3" fill="none" stroke="#dcdcdc" stroke-width=".9"/><path d="M28.2 113.6 L34.6 106.6 L35.6 107.6 L29.4 114.4 Z" fill="#dcdcdc"/><rect x="34.6" y="114.2" width="1.2" height="1.2" fill="#dcdcdc"/><path d="M41.4 110.6 L46.4 106 L50 109.6 L45 114.2 Z" fill="#dcdcdc"/><path d="M41.4 110.6 L43.4 108.8 L47 112.4 L45 114.2 Z" fill="#535353" stroke="#dcdcdc" stroke-width=".7"/><rect x="49.6" y="114.2" width="1.2" height="1.2" fill="#dcdcdc"/><path d="M27 124.6 C28.6 126.6 31.6 126.4 32.8 124.2 C34 121.8 32.4 118.8 29.6 118.8 C28.4 118.8 27.6 119.2 27 119.8" fill="none" stroke="#dcdcdc" stroke-width=".9"/><path d="M25.8 118 L26.2 121.2 L29.2 120.4 Z" fill="#dcdcdc"/><rect x="34.6" y="125.8" width="1.2" height="1.2" fill="#dcdcdc"/><rect x="41" y="121.4" width="5" height="5" fill="none" stroke="#dcdcdc" stroke-width=".8"/><rect x="43.6" y="117.8" width="6.2" height="6.2" fill="none" stroke="#dcdcdc" stroke-width=".8"/><path d="M45 122.6 L48.4 119.2 M46.4 119 H48.6 V121.2" fill="none" stroke="#dcdcdc" stroke-width=".7"/><rect x="49.6" y="125.8" width="1.2" height="1.2" fill="#dcdcdc"/><path d="M26 137.6 C28 137.4 28.4 135 29.8 134.4 C31.4 134 32 136.2 33.8 136 M26 130.6 L29.6 133.6 M27.8 129.6 C28.8 131 30.6 131.2 31.6 130" fill="none" stroke="#dcdcdc" stroke-width=".9"/><circle cx="31.2" cy="132.6" r="1.2" fill="#dcdcdc"/><rect x="34.6" y="137.6" width="1.2" height="1.2" fill="#dcdcdc"/><rect x="41.6" y="130.4" width="7.4" height="6.4" fill="none" stroke="#dcdcdc" stroke-width=".7" stroke-dasharray="1.2 .8"/><g fill="#dcdcdc"><rect x="40.8" y="129.6" width="1.6" height="1.6"/><rect x="48.2" y="129.6" width="1.6" height="1.6"/><rect x="40.8" y="136" width="1.6" height="1.6"/><rect x="48.2" y="136" width="1.6" height="1.6"/><path d="M44 132 L44 136.6 L45.2 135.4 L47.2 135 Z"/></g><rect x="49.6" y="137.6" width="1.2" height="1.2" fill="#dcdcdc"/><circle cx="28" cy="144.4" r="2.8" fill="none" stroke="#dcdcdc" stroke-width=".8"/><circle cx="31" cy="145.4" r="2.8" fill="none" stroke="#dcdcdc" stroke-width=".8"/><path d="M30.4 145.6 L30.4 150 L31.6 149 L33.6 148.6 Z" fill="#dcdcdc"/><rect x="34.6" y="149.4" width="1.2" height="1.2" fill="#dcdcdc"/><path d="M41 149.4 L41 141.4 L50 149.4 Z M43.6 149.4 V143.8 M46.4 149.4 V146.2 M41 146 L46.2 146.2" fill="none" stroke="#dcdcdc" stroke-width=".7"/><rect x="49.6" y="149.4" width="1.2" height="1.2" fill="#dcdcdc"/><rect x="26" y="153.2" width="8" height="7.6" fill="none" stroke="#dcdcdc" stroke-width=".7" stroke-dasharray="1.4 .7"/><path d="M26 157 C28.4 156 31.6 158 34 157 M30 153.2 C29.2 155.6 30.8 158.4 30 160.8" fill="none" stroke="#dcdcdc" stroke-width=".7"/><defs><linearGradient id="tg" x1="0" x2="1"><stop offset="0" stop-color="#e8e8e8"/><stop offset="1" stop-color="#3a3a3a"/></linearGradient></defs><rect x="41.2" y="153.4" width="8.4" height="7.4" fill="url(#tg)" stroke="#dcdcdc" stroke-width=".7"/><path d="M26.6 172.6 L27.2 170.4 L31 166.6 L32.6 168.2 L28.8 172 Z" fill="#dcdcdc"/><path d="M30.6 165 L34.2 168.6 M32.2 164.6 L34.4 166.8" stroke="#dcdcdc" stroke-width="1.1"/><rect x="34.6" y="172.8" width="1.2" height="1.2" fill="#dcdcdc"/><path d="M41.6 173 L42.2 170.6 L46.8 166 L48.6 167.8 L44 172.4 Z" fill="none" stroke="#dcdcdc" stroke-width=".8"/><path d="M47.2 164 C48.6 163.2 50.6 165.2 49.8 166.6 L48.4 168 L46 165.6 Z" fill="#dcdcdc"/><rect x="49.6" y="172.8" width="1.2" height="1.2" fill="#dcdcdc"/><rect x="26" y="177.8" width="4" height="3.4" rx=".8" fill="#dcdcdc"/><circle cx="31" cy="181.2" r="2.6" fill="none" stroke="#dcdcdc" stroke-width=".8"/><circle cx="32.6" cy="182.6" r="2" fill="#dcdcdc"/><rect x="43.4" y="179.4" width="5.4" height="5.4" rx=".8" fill="none" stroke="#dcdcdc" stroke-width=".8"/><path d="M44.8 179.4 V177.4 H47.4 V179.4 M41.6 177.6 L42.8 178.2 M41.4 179.8 H42.6" fill="none" stroke="#dcdcdc" stroke-width=".8"/><circle cx="46.2" cy="182.2" r="1" fill="#dcdcdc"/><rect x="49.6" y="184.4" width="1.2" height="1.2" fill="#dcdcdc"/><g fill="#dcdcdc"><rect x="25.8" y="188.4" width=".8" height="8"/><rect x="27.6" y="192" width="1.4" height="4.4"/><rect x="29.8" y="189.6" width="1.4" height="6.8"/><rect x="32" y="191" width="1.4" height="5.4"/><rect x="34.6" y="196.2" width="1.2" height="1.2"/></g><path d="M43 188 V195.4 H50 M41.4 189.8 H48.4 V196.8" fill="none" stroke="#dcdcdc" stroke-width=".8"/><path d="M26.6 208.6 L27.4 205.4 L31.6 200.6 L33.4 202.2 L29.4 207.2 Z" fill="none" stroke="#dcdcdc" stroke-width=".8"/><path d="M32.4 199.6 L34.4 201.4" stroke="#dcdcdc" stroke-width="1"/><rect x="34.6" y="208" width="1.2" height="1.2" fill="#dcdcdc"/><path d="M42.6 204.4 V201.4 Q43.4 200.6 44.2 201.4 V200 Q45 199.2 45.8 200 V199.6 Q46.6 198.8 47.4 199.6 V200.6 Q48.2 199.8 49 200.6 V205 C49 207.4 47.8 208.8 45.8 208.8 C43.8 208.8 43 207.6 41.6 205.4 C41.2 204.4 42 204 42.6 204.4 Z" fill="#dcdcdc"/><rect x="49.6" y="208" width="1.2" height="1.2" fill="#dcdcdc"/><path d="M26.2 211.4 V219.6 M26.2 212 H31 V215 H26.2 M27.4 216.2 H31.6 V219 H27.4" fill="none" stroke="#dcdcdc" stroke-width=".8"/><circle cx="33" cy="211.8" r="1.6" fill="#2d8cff"/><circle cx="44.6" cy="214.4" r="2.9" fill="none" stroke="#dcdcdc" stroke-width=".9"/><path d="M46.8 216.6 L49.8 219.6" stroke="#dcdcdc" stroke-width="1.1"/><rect x="31.6" y="234.2" width="17" height="16.8" fill="#fff"/><rect x="36" y="238.6" width="8.2" height="8" fill="#535353"/><path d="M32 250.6 L48.2 234.6" stroke="#e8141c" stroke-width="1.1"/><rect x="22.6" y="226" width="17.4" height="16.8" fill="#4a4a4a" stroke="#3a3a3a" stroke-width=".6"/><path d="M44.4 228.6 C46.2 228.2 47.6 229.4 47.4 231.2 M46.4 230.6 L47.4 231.6 L48.4 230.4" fill="none" stroke="#7a7a7a" stroke-width=".7"/><rect x="23" y="246.6" width="4" height="4" fill="#222" stroke="#ddd" stroke-width=".5"/><rect x="25" y="248.6" width="4" height="4" fill="#fff" stroke="#222" stroke-width=".4"/><rect x="24" y="257.4" width="6.4" height="6.2" rx=".8" fill="#f4f4f4"/><rect x="33.2" y="257.4" width="6.4" height="6.2" rx=".8" fill="url(#tg)"/><rect x="42.4" y="257.4" width="6.6" height="6.2" rx=".8" fill="#fff"/><path d="M42.8 263.2 L48.6 257.8" stroke="#e8141c" stroke-width="1"/><rect x="23.6" y="268.8" width="7.2" height="6.8" rx="1" fill="#2c2c2c"/><circle cx="26.4" cy="271.4" r="1.7" fill="none" stroke="#dcdcdc" stroke-width=".7"/><circle cx="28" cy="273" r="1.7" fill="#dcdcdc"/><circle cx="35.6" cy="271.4" r="1.7" fill="#dcdcdc"/><circle cx="37.2" cy="273" r="1.7" fill="none" stroke="#dcdcdc" stroke-width=".7"/><circle cx="45.6" cy="272.2" r="2.2" fill="none" stroke="#777" stroke-width=".7"/><circle cx="45.6" cy="272.2" r=".8" fill="#777"/><rect x="32.4" y="282.6" width="7" height="5" fill="#535353" stroke="#dcdcdc" stroke-width=".8"/><rect x="34.6" y="280.8" width="7" height="5" fill="#535353" stroke="#dcdcdc" stroke-width=".8"/><g fill="#dcdcdc"><circle cx="35" cy="300.4" r=".8"/><circle cx="37.4" cy="300.4" r=".8"/><circle cx="39.8" cy="300.4" r=".8"/></g></svg>
<div class="t" style="left:29.3px;top:229.6px;font-size:7px;color:#dcdcdc;">?</div>
<svg width="698" height="431" viewBox="0 0 698 431"><rect x="61" y="44.8" width="8.8" height="6.6" fill="none" stroke="#dcdcdc" stroke-width=".8"/><rect x="62.4" y="46.2" width="2.6" height="1.8" fill="#dcdcdc"/><rect x="66" y="46.2" width="2.6" height="1.8" fill="#dcdcdc"/><rect x="62.4" y="48.8" width="6.2" height="1.4" fill="#dcdcdc"/><path d="M62.4 62.8 H68.6 L68 67.8 H63 Z" fill="#dcdcdc"/><path d="M63.6 62.4 L62.2 58 M65.4 62.4 V56.8 M67.2 62.4 L69 58 M64.4 57.4 L65.4 56 L66.4 57.4" fill="none" stroke="#dcdcdc" stroke-width="1"/><circle cx="65.4" cy="71.4" r="2.3" fill="#dcdcdc"/><circle cx="63" cy="75" r="2.3" fill="#dcdcdc"/><circle cx="67.8" cy="75" r="2.3" fill="#dcdcdc"/><path d="M65.4 74 L64 79.4 H66.8 Z" fill="#dcdcdc"/><g fill="#dcdcdc"><rect x="61" y="92.2" width="9" height="1"/><rect x="61" y="95" width="9" height="1"/><rect x="61" y="97.8" width="9" height="1"/></g><rect x="61" y="105" width="9" height="7.2" fill="url(#tg)" stroke="#dcdcdc" stroke-width=".7"/><circle cx="64" cy="121.6" r="3.6" fill="#b4b4b4"/><circle cx="66.8" cy="124.2" r="3.6" fill="#8e8e8e" stroke="#dcdcdc" stroke-width=".5"/><circle cx="65.4" cy="143" r="2.7" fill="#dcdcdc"/><g stroke="#dcdcdc" stroke-width=".8"><path d="M65.4 138.4 V139.6 M65.4 146.4 V147.6 M60.8 143 H62 M68.8 143 H70 M62.2 139.8 L63 140.6 M67.8 145.4 L68.6 146.2 M68.6 139.8 L67.8 140.6 M62.2 146.2 L63 145.4"/></g><rect x="63" y="152.6" width="7" height="6.4" fill="none" stroke="#dcdcdc" stroke-width=".8"/><circle cx="63.6" cy="158.6" r="2.4" fill="#535353" stroke="#dcdcdc" stroke-width=".8"/><path d="M61.4 160 L65.8 156.6" stroke="#dcdcdc" stroke-width=".6"/></svg>
<div class="a" style="left:58px;top:170.2px;width:15px;height:13.4px;background:#2e2e2e;border-radius:1px;"></div>
<svg width="698" height="431" viewBox="0 0 698 431"><g stroke="#dcdcdc" stroke-width=".8" fill="#2e2e2e"><path d="M60.6 173.6 H70.4 M60.6 176.9 H70.4 M60.6 180.2 H70.4"/><circle cx="67.4" cy="173.6" r="1.1"/><circle cx="63.4" cy="176.9" r="1.1"/><circle cx="66.4" cy="180.2" r="1.1"/></g><path d="M61 186.6 H67.6 V188.2 H66.8 V187.6 H64.8 V193.4 H65.6 V194.2 H63 V193.4 H63.8 V187.6 H61.8 V188.2 H61 Z" fill="#dcdcdc"/><circle cx="68.2" cy="192.6" r="1.9" fill="none" stroke="#dcdcdc" stroke-width=".7"/><path d="M69.6 194 L71 195.4" stroke="#dcdcdc" stroke-width=".8"/><rect x="62" y="200.6" width="6.8" height="6.8" fill="none" stroke="#dcdcdc" stroke-width=".7" stroke-dasharray="1.2 .9"/><g fill="#dcdcdc"><rect x="61" y="199.6" width="1.8" height="1.8"/><rect x="68" y="199.6" width="1.8" height="1.8"/><rect x="61" y="206.6" width="1.8" height="1.8"/><rect x="68" y="206.6" width="1.8" height="1.8"/></g><g fill="#dcdcdc"><rect x="61" y="213" width=".9" height="9.4"/><rect x="62.8" y="214.4" width="4.4" height="2.6"/><rect x="62.8" y="218.4" width="7" height="2.6"/></g><rect x="61.4" y="227.2" width="5.4" height="5.4" fill="#dcdcdc"/><rect x="64.2" y="230" width="5.6" height="5.6" fill="#535353" stroke="#dcdcdc" stroke-width=".8"/><rect x="64.2" y="230" width="2.6" height="2.6" fill="#9a9a9a"/><path d="M60.4 252.6 C60.4 249.6 63 247.8 66 247.8 C69 247.8 71 249.4 71 251.4 C71 253.2 69.4 253.4 68.2 253.4 C67 253.4 66.8 254.4 67.4 255 C67.8 256 66.8 256.8 65.4 256.8 C62.4 256.8 60.4 255.2 60.4 252.6 Z" fill="none" stroke="#dcdcdc" stroke-width=".9"/><circle cx="63" cy="251.4" r=".8" fill="#dcdcdc"/><circle cx="65.6" cy="250" r=".8" fill="#dcdcdc"/><circle cx="68.4" cy="250.8" r=".8" fill="#dcdcdc"/><circle cx="63" cy="254" r=".8" fill="#dcdcdc"/></svg>
<div class="a" style="left:75.6px;top:164.4px;width:122.4px;height:237.6px;background:#3a3a3a;"></div>
<div class="a" style="left:76px;top:165px;width:121.6px;height:13.6px;background:#424242;"></div>
<div class="a" style="left:76px;top:165px;width:28.6px;height:13.8px;background:#535353;"></div>
<div class="a" style="left:76px;top:178.6px;width:121.6px;height:217.6px;background:#535353;"></div>
<div class="a" style="left:76px;top:397px;width:121.6px;height:3.4px;background:#535353;"></div>
<div class="a" style="left:192px;top:178.6px;width:5.6px;height:217.6px;background:#4a4a4a;"></div>
<div class="a" style="left:192.6px;top:186px;width:4.2px;height:98px;background:#6c6c6c;border-radius:1px;"></div>
<svg width="698" height="431" viewBox="0 0 698 431"><path d="M193.2 183.4 L194.7 181.8 L196.2 183.4" fill="none" stroke="#bbb" stroke-width=".8"/></svg>
<div class="t" style="left:79.3px;top:166.6px;font-size:6.4px;color:#f2f2f2;font-weight:bold;transform:scaleX(0.716)">プロパティ</div>
<div class="t" style="left:109.6px;top:166.8px;font-size:5.8px;color:#b8b8b8;transform:scaleX(0.964)">Retყ</div>
<div class="t" style="left:125px;top:166.8px;font-size:5.8px;color:#b8b8b8;transform:scaleX(0.948)">変形</div>
<div class="t" style="left:140px;top:166.8px;font-size:5.8px;color:#b8b8b8;transform:scaleX(0.948)">整列</div>
<div class="t" style="left:155.6px;top:166.8px;font-size:5.8px;color:#b8b8b8;transform:scaleX(0.913)">パス</div>
<svg width="698" height="431" viewBox="0 0 698 431"><g fill="none" stroke="#c8c8c8" stroke-width=".7"><path d="M178.8 170.2 L177.4 171.6 L178.8 173 M181 170.2 L179.6 171.6 L181 173"/></g><rect x="185" y="169.4" width=".6" height="4.6" fill="#9a9a9a"/><g fill="#c8c8c8"><rect x="189.6" y="169.8" width="4.6" height=".7"/><rect x="189.6" y="171.4" width="4.6" height=".7"/><rect x="189.6" y="173" width="4.6" height=".7"/></g></svg>
<div class="t" style="left:80px;top:182px;font-size:6.4px;color:#c4c4c4;transform:scaleX(0.919)">生成オブジェクト</div>
<svg width="698" height="431" viewBox="0 0 698 431"><circle cx="181.6" cy="187" r="3.3" fill="none" stroke="#dcdcdc" stroke-width=".8"/><rect x="181.2" y="186.4" width=".9" height="2.6" fill="#dcdcdc"/><rect x="181.2" y="184.8" width=".9" height=".9" fill="#dcdcdc"/></svg>
<div class="a" style="left:76px;top:194.8px;width:116px;height:0.7px;background:#484848;"></div>
<div class="a" style="left:80px;top:203.4px;width:108.4px;height:20px;background:#3c3c3c;border-radius:1.5px;"></div>
<div class="t" style="left:82.2px;top:203.2px;font-size:6.2px;color:#e4e4e4;transform:scaleX(0.945)">動物が戯れる様子を</div>
<svg width="698" height="431" viewBox="0 0 698 431"><path d="M178.8 211.4 L182 214.8 M182 211.4 L178.8 214.8" stroke="#e8e8e8" stroke-width="1"/></svg>
<svg width="698" height="431" viewBox="0 0 698 431"><path d="M81.6 234.6 C82 231 85.4 230 87.6 232 M82 236.4 H88.4 M86 230.4 L88 232.2 L86.2 233.8" fill="none" stroke="#dcdcdc" stroke-width=".9"/><path d="M83.4 229.6 L86.6 234.6 H80.6 Z" fill="#dcdcdc"/><g fill="none" stroke="#dcdcdc" stroke-width=".8"><circle cx="101" cy="231.6" r="2.4"/><circle cx="99.4" cy="234.2" r="2.4"/><circle cx="102.6" cy="234.2" r="2.4"/><circle cx="101" cy="233.2" r="4.6"/></g><circle cx="116.4" cy="233" r="2.6" fill="none" stroke="#dcdcdc" stroke-width="1.6"/><g stroke="#dcdcdc" stroke-width="1.3"><path d="M116.4 228.8 V230 M116.4 236 V237.2 M112.2 233 H113.4 M119.4 233 H120.6 M113.4 230 L114.3 230.9 M118.5 235.1 L119.4 236 M119.4 230 L118.5 230.9 M113.4 236 L114.3 235.1"/></g></svg>
<div class="a" style="left:125.3px;top:227px;width:63.6px;height:12.4px;background:transparent;border:1px solid #6e6e6e;border-radius:2px;"></div>
<svg width="698" height="431" viewBox="0 0 698 431"><path d="M150.8 230.4 H147.6 V236.6 H153.6 V233.8" fill="none" stroke="#dcdcdc" stroke-width=".9"/><path d="M150 234.2 L153.2 231 M151.6 230.6 H153.6 V232.6" fill="none" stroke="#dcdcdc" stroke-width=".8"/><path d="M154.4 229.2 V231 M153.5 230.1 H155.3" stroke="#dcdcdc" stroke-width=".6"/></svg>
<div class="t" style="left:157.4px;top:228.4px;font-size:6.4px;color:#e8e8e8;font-weight:bold;transform:scaleX(0.908)">生成</div>
<svg width="698" height="431" viewBox="0 0 698 431"><path d="M80.19999999999999 249.3 L81.6 250.7 L83.0 249.3" fill="none" stroke="#dcdcdc" stroke-width=".9"/></svg>
<div class="t" style="left:86px;top:245px;font-size:6.4px;color:#c4c4c4;transform:scaleX(0.906)">バリエーション</div>
<div class="a" style="left:79.8px;top:260.4px;width:33.2px;height:33.4px;background:#fff;border:1px solid #2e2e2e;border-radius:1.5px;"></div>
<div class="a" style="left:114.6px;top:260.2px;width:33.4px;height:33.8px;background:#fff;border:1.2px solid #2f86f0;border-radius:1px;"></div>
<div class="a" style="left:149.4px;top:260.4px;width:33.4px;height:33.4px;background:#fff;border:1px solid #2e2e2e;border-radius:1.5px;"></div>
<svg width="698" height="431" viewBox="0 0 698 431" style="position:absolute;left:0;top:0">
<!-- thumb 1 -->
<path d="M83.5 286 C83 274 89 266.5 97 266.5 C105 266.5 110.5 274 110 286 Z" fill="#dcefec"/>
<ellipse cx="96.4" cy="286" rx="14.6" ry="2.2" fill="#8cc152"/>
<path d="M84.5 285 C84 280 86 275.5 87.5 273.5 C89.5 276 91 281 90.5 285 Z" fill="#5aa85a"/>
<path d="M105 285.5 C106 282 108.5 280 110.5 279.6 C110.5 282 109 284.5 107 285.6 Z" fill="#6ab45a"/>
<circle cx="87.8" cy="268.3" r="2.5" fill="#f9b43a"/>
<path d="M90.3 278.8 C92.5 277.4 95 277.6 96.6 278.2 L99.4 270.6 L101.4 269 L102.6 270.4 L100.6 272 L98.8 279.6 L98.6 286 L97.4 286 L97 282.4 L92.6 282.4 L92.2 286 L91 286 Z" fill="#e9a65c"/>
<path d="M100.2 267.6 L100.8 269.4 M101.6 267.8 L101.6 269.2" stroke="#a86a2a" stroke-width=".6"/>
<ellipse cx="104.3" cy="279.4" rx="3.4" ry="3.8" fill="#8e9dcc"/><circle cx="101.6" cy="276.8" r="1.9" fill="#a4b0d8"/><circle cx="107" cy="276.8" r="1.9" fill="#a4b0d8"/><rect x="102.2" y="282" width="4.4" height="3.8" fill="#8090c4"/>
<path d="M98 286.4 L98.4 282.8 L99.4 281.4 L100.6 282.8 L101 286.4 Z" fill="#f07a30"/><circle cx="99.4" cy="282.4" r="1.2" fill="#f48a3a"/>
<circle cx="82.6" cy="273" r=".9" fill="#f07aa0"/><circle cx="83.6" cy="270.8" r=".6" fill="#f8a0b8"/><circle cx="105.4" cy="272" r=".8" fill="#f4b060"/><circle cx="92" cy="272.6" r=".6" fill="#7ac0d8"/>
<!-- thumb 2 -->
<path d="M118 285 C117.6 273.5 123.5 267 131.2 267 C139 267 145 273.5 144.5 285 Z" fill="#d6eaea"/>
<ellipse cx="131.3" cy="285.8" rx="13.8" ry="2.6" fill="#e6eab4"/>
<path d="M118.6 284 C118.4 279.5 119.4 275.5 120.6 273.4 C122.4 276 123.4 280 122.8 284 Z" fill="#a9cbc8"/>
<path d="M141.4 283.6 C141.2 279.5 142.2 276 143.2 274 C144.8 276.4 145.4 280 144.8 283.6 Z" fill="#a9cbc8"/>
<path d="M126 272 L131 271.2 L134.4 271.6 L134 272.6 L126 272.8 Z" fill="#fff"/>
<path d="M121 284.4 C120.6 281.4 122.6 279 125.6 278.6 L128.4 274.8 C128.6 273 130.4 272.4 131.8 273.4 C133 274.4 132.8 276 131.4 276.6 L130.2 280.6 L131.6 284.6 L129.6 284.8 L128.6 283.8 L127.4 285.6 L123 285.8 Z" fill="#f5c493"/>
<path d="M135.2 275.4 C135.2 273.6 138.6 273.6 138.8 275.4 C139.6 276.4 139.4 278 138.4 278.6 L139.6 284.2 L134.8 284.2 L135.6 278.6 C134.6 278 134.4 276.4 135.2 275.4 Z" fill="#dcb6a6"/>
<circle cx="133.8" cy="285.6" r="1" fill="#9ac0d8"/><circle cx="140.2" cy="285" r="1.4" fill="#f4b0c0"/><circle cx="143.2" cy="283.6" r="1.4" fill="#f8c8a8"/><circle cx="133.8" cy="281" r=".7" fill="#f4c0a0"/>
<!-- thumb 3 -->
<path d="M152.4 286 C152 274 158 266.5 166 266.5 C174 266.5 180 274 179.6 286 Z" fill="#e6f2f6"/>
<ellipse cx="166" cy="286.4" rx="14.4" ry="2" fill="#8cc25a"/>
<circle cx="158.7" cy="269.9" r="2.3" fill="#f9a83a"/><circle cx="158.9" cy="274.6" r="1.7" fill="#f9b850"/>
<path d="M164.4 269.8 L166.6 268.4 L167 270.6 Z" fill="#f08a30"/>
<path d="M160.4 286.2 C160 282 161.4 279.4 163 278 C161.6 276.6 161.6 273.4 163.2 272.4 C164.6 271.2 167.4 271.2 168.8 272.4 C170.4 273.4 170.4 276.6 169 278 C170.6 279.4 171.8 282 171.6 286.2 Z" fill="#e8773a"/>
<circle cx="162.6" cy="272.2" r="1.2" fill="#e8773a"/><circle cx="169.4" cy="272.2" r="1.2" fill="#e8773a"/>
<path d="M169.4 279.4 L173.4 276.6 L174 277.6 L170 281 Z M162.4 279.4 L158.8 277.4 L158.4 278.4 L161.8 281 Z" fill="#e8773a"/>
<ellipse cx="166" cy="281.8" rx="2.6" ry="2.8" fill="#f8c090"/>
<ellipse cx="157.2" cy="280.6" rx="3.3" ry="3.6" fill="#7f9ccc"/><circle cx="154.8" cy="278.4" r="1.7" fill="#9ab2d8"/><circle cx="159.6" cy="278.4" r="1.7" fill="#9ab2d8"/><rect x="155.2" y="283" width="4" height="3" fill="#7890c4"/>
<ellipse cx="175" cy="283.4" rx="2.6" ry="2.8" fill="#f0f0f0" stroke="#d0d0d8" stroke-width=".3"/><path d="M174 281 L173.6 277.8 L174.8 280.8 Z M176 281 L176.8 278 L176.8 281 Z" fill="#e8e8ee"/>
<circle cx="173.7" cy="275.7" r="1.7" fill="#f06a5a"/>
<circle cx="154" cy="271.4" r=".7" fill="#7ac0e8"/><circle cx="178" cy="272" r=".8" fill="#f07aa0"/><circle cx="171.4" cy="269" r=".6" fill="#7ac0e8"/><circle cx="153.4" cy="275.6" r=".6" fill="#f8a0b8"/><circle cx="178.6" cy="278" r=".6" fill="#7ac0e8"/>
</svg>

<div class="a" style="left:76px;top:333.2px;width:116px;height:0.7px;background:#484848;"></div>
<div class="t" style="left:80px;top:339px;font-size:6px;color:#c4c4c4;transform:scaleX(0.866)">変形</div>
<svg width="698" height="431" viewBox="0 0 698 431"><g fill="none" stroke="#dcdcdc" stroke-width=".6"><rect x="80.6" y="356.8" width="2" height="2"/><rect x="80.6" y="360.0" width="2" height="2"/><rect x="80.6" y="363.2" width="2" height="2"/><rect x="83.8" y="356.8" width="2" height="2"/><rect x="83.8" y="360.0" width="2" height="2"/><rect x="83.8" y="363.2" width="2" height="2"/><rect x="87.0" y="356.8" width="2" height="2"/><rect x="87.0" y="360.0" width="2" height="2"/><rect x="87.0" y="363.2" width="2" height="2"/></g><rect x="80.6" y="360" width="2" height="2" fill="#dcdcdc"/></svg>
<div class="t" style="left:95px;top:349.7px;font-size:6.4px;color:#c4c4c4;transform:scaleX(0.971)">X :</div>
<div class="t" style="left:95px;top:362.5px;font-size:6.4px;color:#c4c4c4;transform:scaleX(0.987)">Y :</div>
<div class="t" style="left:139.6px;top:349.7px;font-size:6.4px;color:#c4c4c4;transform:scaleX(0.938)">W :</div>
<div class="t" style="left:139.6px;top:362.5px;font-size:6.4px;color:#c4c4c4;transform:scaleX(0.979)">H :</div>
<div class="a" style="left:105px;top:350.6px;width:27px;height:8px;background:#3c3c3c;border-radius:1px;"></div>
<div class="t" style="left:106.4px;top:349.9px;font-size:7px;color:#e6e6e6;transform:scaleX(0.988)">25.6802</div>
<div class="a" style="left:105px;top:363.3px;width:27px;height:8.2px;background:#3c3c3c;border-radius:1px;"></div>
<div class="t" style="left:106.4px;top:362.7px;font-size:7px;color:#e6e6e6;transform:scaleX(0.988)">248.614</div>
<div class="a" style="left:152px;top:350.6px;width:27px;height:8px;background:#3c3c3c;border-radius:1px;"></div>
<div class="t" style="left:153.4px;top:349.9px;font-size:7px;color:#e6e6e6;transform:scaleX(0.988)">470.629</div>
<div class="a" style="left:152px;top:363.3px;width:27px;height:8.2px;background:#3c3c3c;border-radius:1px;"></div>
<div class="t" style="left:153.4px;top:362.7px;font-size:7px;color:#e6e6e6;transform:scaleX(1.008)">311.072</div>
<svg width="698" height="431" viewBox="0 0 698 431"><g fill="none" stroke="#dcdcdc" stroke-width=".8"><g transform="rotate(-32 187.2 361)"><rect x="185.7" y="355.4" width="3" height="4.6" rx="1.5"/><rect x="185.7" y="362" width="3" height="4.6" rx="1.5"/></g><path d="M183.6 357.6 L190.8 364.6"/></g></svg>
<svg width="698" height="431" viewBox="0 0 698 431"><path d="M92 381 H97.6 L93.4 376.6 M95.6 381 C95.6 379.8 95.2 379 94.6 378.2" fill="none" stroke="#dcdcdc" stroke-width=".8"/></svg>
<div class="a" style="left:101px;top:375.7px;width:17.8px;height:8.4px;background:#3c3c3c;border-radius:1px;"></div>
<div class="t" style="left:102.4px;top:375.2px;font-size:7px;color:#e6e6e6;transform:scaleX(0.895)">0°</div>
<div class="a" style="left:119.8px;top:375.7px;width:6.8px;height:8.4px;background:#464646;border-radius:1px;"></div>
<svg width="698" height="431" viewBox="0 0 698 431"><path d="M121.7 379.25 L123.2 380.75 L124.7 379.25" fill="none" stroke="#dcdcdc" stroke-width=".9"/></svg>
<svg width="698" height="431" viewBox="0 0 698 431"><g fill="#dcdcdc"><path d="M148.8 377.6 L151.4 380 L148.8 382.4 Z M155.6 377.6 L153 380 L155.6 382.4 Z"/><rect x="151.9" y="376.8" width=".6" height="6.4"/><path d="M162 376.2 L164.4 378.8 L166.8 376.2 Z M162 383.8 L164.4 381.2 L166.8 383.8 Z"/><rect x="161.2" y="379.7" width="6.4" height=".6"/></g></svg>
<svg width="698" height="431" viewBox="0 0 698 431"><g fill="#dcdcdc"><circle cx="182" cy="390.4" r=".8"/><circle cx="184.4" cy="390.4" r=".8"/><circle cx="186.8" cy="390.4" r=".8"/></g></svg>
<div class="a" style="left:131px;top:399.2px;width:10px;height:1px;background:#2e2e2e;"></div>
<div class="a" style="left:247.8px;top:387px;width:205px;height:18.4px;background:#383838;border-radius:2.5px;box-shadow:0 0 1.5px rgba(0,0,0,.5);"></div>
<div class="a" style="left:251.4px;top:390px;width:1.3px;height:12.4px;background:#9a9a9a;border-radius:.6px;"></div>
<div class="a" style="left:258.3px;top:390px;width:62.2px;height:12.6px;background:#383838;border:.8px solid #585858;border-radius:1.5px;"></div>
<div class="a" style="left:323.5px;top:390px;width:55.4px;height:12.6px;background:#383838;border:.8px solid #585858;border-radius:1.5px;"></div>
<svg width="698" height="431" viewBox="0 0 698 431"><path d="M266.6 393.6 H263.6 V399.6 H269.4 V396.8" fill="none" stroke="#dcdcdc" stroke-width=".9"/><path d="M265.8 397.2 L268.8 394.2 M267.4 393.8 H269.2 V395.6" fill="none" stroke="#dcdcdc" stroke-width=".8"/><path d="M270 392.4 V394 M269.2 393.2 H270.8" stroke="#dcdcdc" stroke-width=".6"/><rect x="327.4" y="393" width="6.4" height="6.4" fill="none" stroke="#dcdcdc" stroke-width=".6" stroke-dasharray="1.1 .8"/><rect x="328.4" y="394" width="2.2" height="2.2" fill="#dcdcdc"/><rect x="330.6" y="396.4" width="2.4" height="2.4" fill="none" stroke="#dcdcdc" stroke-width=".6"/><g fill="#dcdcdc"><rect x="326.6" y="392.2" width="1.4" height="1.4"/><rect x="333.2" y="392.2" width="1.4" height="1.4"/><rect x="326.6" y="398.8" width="1.4" height="1.4"/><rect x="333.2" y="398.8" width="1.4" height="1.4"/></g><path d="M384.6 394 L389.4 398.6 M389.4 394 L384.6 398.6 M384 395.4 V393.4 H386 M388 393.4 H390 V395.4 M384 397.2 V399.2 H386 M388 399.2 H390 V397.2" fill="none" stroke="#dcdcdc" stroke-width=".7"/><circle cx="401.8" cy="396.2" r="3.8" fill="#8e8e8e" stroke="#dcdcdc" stroke-width=".7"/><path d="M399.4 394.6 C400.8 393.4 402.6 394 402.2 395.4 C401.8 396.8 400 396.4 399.8 397.8 C400 398.8 401.6 399 402.4 399.6 M403.6 393.6 C404.6 394.6 404.8 396 404.4 397.4" fill="none" stroke="#eee" stroke-width=".8"/><rect x="410.6" y="392.2" width="7.6" height="8" fill="#4a4a4a" stroke="#666" stroke-width=".5"/><g fill="#dcdcdc"><rect x="422.8" y="393" width="7.6" height="1.2"/><rect x="422.8" y="395.6" width="7.6" height="1.2"/><rect x="422.8" y="398.2" width="7.6" height="1.2"/><circle cx="439" cy="396.4" r=".9"/><circle cx="441.8" cy="396.4" r=".9"/><circle cx="444.6" cy="396.4" r=".9"/></g></svg>
<div class="t" style="left:273px;top:391.4px;font-size:6.2px;color:#e6e6e6;font-weight:500;transform:scaleX(1.026)">ベクターを生成</div>
<div class="t" style="left:337.6px;top:391.4px;font-size:6.2px;color:#e6e6e6;font-weight:500;transform:scaleX(1.034)">グループ解除</div>
<div class="t" style="left:412.8px;top:391.4px;font-size:6.4px;color:#e6e6e6;">?</div>
<svg width="698" height="431" viewBox="0 0 698 431"><circle cx="79.4" cy="431" r="3.3" fill="#e4e4e4"/><rect x="78.9" y="429.2" width="1" height="2" fill="#333"/></svg>
<div class="t" style="left:89.6px;top:427.7px;font-size:6.3px;color:#c8c8c8;transform:scaleX(0.885)">選択するオブジェクトをクリック | Shift キーを押しながらクリックして複数のオブジェクトを選択 | 選択するオブジェクトを Alt キーを押しながらドラッグ</div>
<div class="a" id="rmenu" style="left:604.8px;top:0px;width:94px;height:431px;background:#f6f6f6;box-shadow:-0.5px 0 1.2px rgba(0,0,0,.55);"></div>
<div class="a" style="left:613px;top:0px;width:8.4px;height:7.4px;background:#e9e9e9;"></div>
<svg width="698" height="431" viewBox="0 0 698 431"><path d="M614.6 5 L617.2 2.4 L619.8 5 Z" fill="#8a8a8a"/></svg>
<div class="a" style="left:608px;top:30.4px;width:86px;height:0.6px;background:#e4e4e4;"></div>
<div class="a" style="left:608px;top:44.4px;width:86px;height:0.6px;background:#e4e4e4;"></div>
<div class="t" style="left:621.6px;top:8px;font-size:5.9px;color:#161616;font-weight:500;transform:scaleX(0.803)">上部にドッキング</div>
<div class="t" style="left:621.6px;top:18.6px;font-size:5.9px;color:#161616;font-weight:500;transform:scaleX(0.803)">下部にドッキング</div>
<div class="t" style="left:621.6px;top:32.2px;font-size:5.9px;color:#161616;font-weight:500;transform:scaleX(0.747)">ピクセルにスナップ</div>
<div class="t" style="left:621.6px;top:47.0px;font-size:5.9px;color:#161616;font-weight:500;transform:scaleX(0.729)">アンカーポイント</div>
<div class="t" style="left:621.6px;top:57.8px;font-size:5.9px;color:#161616;font-weight:500;transform:scaleX(0.732)">アートボード</div>
<div class="t" style="left:621.6px;top:68.6px;font-size:5.9px;color:#161616;font-weight:500;transform:scaleX(0.732)">エンベロープ</div>
<div class="t" style="left:621.6px;top:79.4px;font-size:5.9px;color:#161616;font-weight:500;transform:scaleX(0.792)">オブジェクトの種類</div>
<div class="t" style="left:621.6px;top:90.2px;font-size:5.9px;color:#161616;font-weight:500;transform:scaleX(0.816)">オブジェクトを一括選択</div>
<div class="t" style="left:621.6px;top:101.0px;font-size:5.9px;color:#161616;font-weight:500;transform:scaleX(0.805)">オブジェクトを再配色</div>
<div class="t" style="left:621.6px;top:111.8px;font-size:5.9px;color:#161616;font-weight:500;transform:scaleX(0.725)">クリッピングマスク</div>
<div class="t" style="left:621.6px;top:122.6px;font-size:5.9px;color:#161616;font-weight:500;transform:scaleX(0.839)">クロスと重なり</div>
<div class="t" style="left:621.6px;top:133.4px;font-size:5.9px;color:#161616;font-weight:500;transform:scaleX(0.726)">グラデーションツール</div>
<div class="t" style="left:621.6px;top:144.2px;font-size:5.9px;color:#161616;font-weight:500;transform:scaleX(0.728)">グラフィックスタイル</div>
<div class="t" style="left:621.6px;top:155.0px;font-size:5.9px;color:#161616;font-weight:500;transform:scaleX(0.75)">グリフにスナップ</div>
<div class="t" style="left:621.6px;top:165.8px;font-size:5.9px;color:#161616;font-weight:500;transform:scaleX(0.725)">シェイプ</div>
<div class="t" style="left:621.6px;top:176.6px;font-size:5.9px;color:#161616;font-weight:500;transform:scaleX(0.725)">シンボル</div>
<div class="t" style="left:621.6px;top:187.4px;font-size:5.9px;color:#161616;font-weight:500;transform:scaleX(0.782)">スウォッチ情報</div>
<div class="t" style="left:621.6px;top:198.2px;font-size:5.9px;color:#161616;font-weight:500;transform:scaleX(0.734)">トレース</div>
<div class="t" style="left:621.6px;top:209.0px;font-size:5.9px;color:#161616;font-weight:500;transform:scaleX(0.725)">ドキュメント</div>
<div class="t" style="left:621.6px;top:219.8px;font-size:5.9px;color:#161616;font-weight:500;transform:scaleX(0.747)">パス上オブジェクト</div>
<div class="t" style="left:621.6px;top:230.6px;font-size:5.9px;color:#161616;font-weight:500;transform:scaleX(0.731)">パペットワープ</div>
<div class="t" style="left:621.6px;top:241.4px;font-size:5.9px;color:#161616;font-weight:500;transform:scaleX(0.725)">フォーカスモード</div>
<div class="t" style="left:621.6px;top:252.2px;font-size:5.9px;color:#161616;font-weight:500;transform:scaleX(0.729)">ブラシ</div>
<div class="t" style="left:621.6px;top:263.0px;font-size:5.9px;color:#161616;font-weight:500;transform:scaleX(0.725)">モックアップ</div>
<div class="t" style="left:621.6px;top:273.8px;font-size:5.9px;color:#161616;font-weight:500;transform:scaleX(0.725)">ライブコーナー</div>
<div class="t" style="left:621.6px;top:284.6px;font-size:5.9px;color:#161616;font-weight:500;transform:scaleX(0.725)">ライブペイント</div>
<div class="t" style="left:621.6px;top:295.4px;font-size:5.9px;color:#161616;font-weight:500;transform:scaleX(0.769)">ライブペイント結合</div>
<div class="t" style="left:621.6px;top:306.2px;font-size:5.9px;color:#161616;font-weight:500;transform:scaleX(0.725)">リピートグリッド</div>
<div class="t" style="left:621.6px;top:317.0px;font-size:5.9px;color:#161616;font-weight:500;transform:scaleX(0.725)">リピートミラー</div>
<div class="t" style="left:621.6px;top:327.8px;font-size:5.9px;color:#161616;font-weight:500;transform:scaleX(0.728)">リピートラジアル</div>
<div class="t" style="left:621.6px;top:338.6px;font-size:5.9px;color:#161616;font-weight:500;transform:scaleX(0.925)">共通の選択</div>
<div class="t" style="left:621.6px;top:349.4px;font-size:5.9px;color:#161616;font-weight:500;transform:scaleX(0.925)">垂直方向揃え</div>
<div class="t" style="left:621.6px;top:360.2px;font-size:5.9px;color:#161616;font-weight:500;transform:scaleX(0.925)">塗りと線</div>
<div class="t" style="left:621.6px;top:371.0px;font-size:5.9px;color:#161616;font-weight:500;transform:scaleX(0.925)">変形</div>
<div class="t" style="left:621.6px;top:381.8px;font-size:5.9px;color:#161616;font-weight:500;transform:scaleX(0.925)">寸法</div>
<div class="t" style="left:621.6px;top:392.6px;font-size:5.9px;color:#161616;font-weight:500;transform:scaleX(0.925)">整列</div>
<div class="t" style="left:621.6px;top:403.4px;font-size:5.9px;color:#161616;font-weight:500;transform:scaleX(0.925)">文字</div>
<div class="t" style="left:621.6px;top:414.2px;font-size:5.9px;color:#161616;font-weight:500;transform:scaleX(0.925)">段落</div>
<div class="t" style="left:621.6px;top:425.0px;font-size:5.9px;color:#161616;font-weight:500;transform:scaleX(0.925)">生成</div>
<svg width="698" height="431" viewBox="0 0 698 431"><path d="M610 13.0 L611.4 14.5 L614.2 11.4" fill="none" stroke="#3a3a3a" stroke-width=".8"/><path d="M610 37.2 L611.4 38.7 L614.2 35.6" fill="none" stroke="#3a3a3a" stroke-width=".8"/><path d="M610 52.0 L611.4 53.5 L614.2 50.4" fill="none" stroke="#3a3a3a" stroke-width=".8"/><path d="M610 62.8 L611.4 64.3 L614.2 61.2" fill="none" stroke="#3a3a3a" stroke-width=".8"/><path d="M610 73.6 L611.4 75.1 L614.2 72.0" fill="none" stroke="#3a3a3a" stroke-width=".8"/><path d="M610 84.4 L611.4 85.9 L614.2 82.8" fill="none" stroke="#3a3a3a" stroke-width=".8"/><path d="M610 95.2 L611.4 96.7 L614.2 93.6" fill="none" stroke="#3a3a3a" stroke-width=".8"/><path d="M610 106.0 L611.4 107.5 L614.2 104.4" fill="none" stroke="#3a3a3a" stroke-width=".8"/><path d="M610 116.8 L611.4 118.3 L614.2 115.2" fill="none" stroke="#3a3a3a" stroke-width=".8"/><path d="M610 127.6 L611.4 129.1 L614.2 126.0" fill="none" stroke="#3a3a3a" stroke-width=".8"/><path d="M610 138.4 L611.4 139.9 L614.2 136.8" fill="none" stroke="#3a3a3a" stroke-width=".8"/><path d="M610 149.2 L611.4 150.7 L614.2 147.6" fill="none" stroke="#3a3a3a" stroke-width=".8"/><path d="M610 160.0 L611.4 161.5 L614.2 158.4" fill="none" stroke="#3a3a3a" stroke-width=".8"/><path d="M610 170.8 L611.4 172.3 L614.2 169.2" fill="none" stroke="#3a3a3a" stroke-width=".8"/><path d="M610 181.6 L611.4 183.1 L614.2 180.0" fill="none" stroke="#3a3a3a" stroke-width=".8"/><path d="M610 192.4 L611.4 193.9 L614.2 190.8" fill="none" stroke="#3a3a3a" stroke-width=".8"/><path d="M610 203.2 L611.4 204.7 L614.2 201.6" fill="none" stroke="#3a3a3a" stroke-width=".8"/><path d="M610 214.0 L611.4 215.5 L614.2 212.4" fill="none" stroke="#3a3a3a" stroke-width=".8"/><path d="M610 224.8 L611.4 226.3 L614.2 223.2" fill="none" stroke="#3a3a3a" stroke-width=".8"/><path d="M610 235.6 L611.4 237.1 L614.2 234.0" fill="none" stroke="#3a3a3a" stroke-width=".8"/><path d="M610 246.4 L611.4 247.9 L614.2 244.8" fill="none" stroke="#3a3a3a" stroke-width=".8"/><path d="M610 257.2 L611.4 258.7 L614.2 255.6" fill="none" stroke="#3a3a3a" stroke-width=".8"/><path d="M610 268.0 L611.4 269.5 L614.2 266.4" fill="none" stroke="#3a3a3a" stroke-width=".8"/><path d="M610 278.8 L611.4 280.3 L614.2 277.2" fill="none" stroke="#3a3a3a" stroke-width=".8"/><path d="M610 289.6 L611.4 291.1 L614.2 288.0" fill="none" stroke="#3a3a3a" stroke-width=".8"/><path d="M610 300.4 L611.4 301.9 L614.2 298.8" fill="none" stroke="#3a3a3a" stroke-width=".8"/><path d="M610 311.2 L611.4 312.7 L614.2 309.6" fill="none" stroke="#3a3a3a" stroke-width=".8"/><path d="M610 322.0 L611.4 323.5 L614.2 320.4" fill="none" stroke="#3a3a3a" stroke-width=".8"/><path d="M610 332.8 L611.4 334.3 L614.2 331.2" fill="none" stroke="#3a3a3a" stroke-width=".8"/><path d="M610 343.6 L611.4 345.1 L614.2 342.0" fill="none" stroke="#3a3a3a" stroke-width=".8"/><path d="M610 354.4 L611.4 355.9 L614.2 352.8" fill="none" stroke="#3a3a3a" stroke-width=".8"/><path d="M610 365.2 L611.4 366.7 L614.2 363.6" fill="none" stroke="#3a3a3a" stroke-width=".8"/><path d="M610 376.0 L611.4 377.5 L614.2 374.4" fill="none" stroke="#3a3a3a" stroke-width=".8"/><path d="M610 386.8 L611.4 388.3 L614.2 385.2" fill="none" stroke="#3a3a3a" stroke-width=".8"/><path d="M610 397.6 L611.4 399.1 L614.2 396.0" fill="none" stroke="#3a3a3a" stroke-width=".8"/><path d="M610 408.4 L611.4 409.9 L614.2 406.8" fill="none" stroke="#3a3a3a" stroke-width=".8"/><path d="M610 419.2 L611.4 420.7 L614.2 417.6" fill="none" stroke="#3a3a3a" stroke-width=".8"/><path d="M610 430.0 L611.4 431.5 L614.2 428.4" fill="none" stroke="#3a3a3a" stroke-width=".8"/></svg>
</body></html>
